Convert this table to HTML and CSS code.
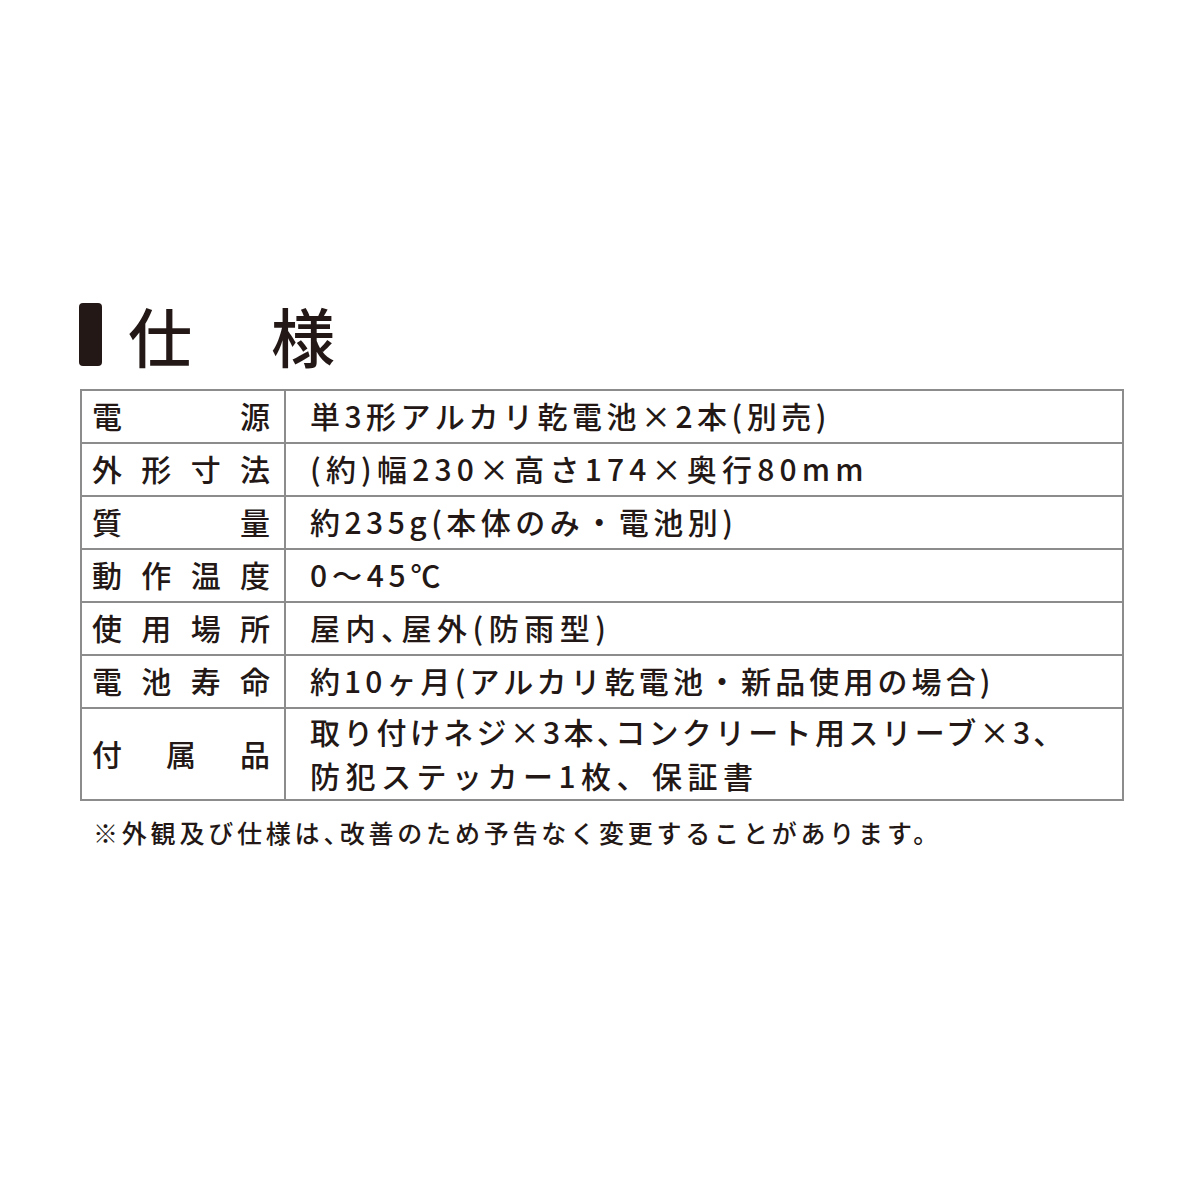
FILE: index.html
```html
<!DOCTYPE html>
<html lang="ja">
<head>
<meta charset="utf-8">
<title>仕様</title>
<link rel="stylesheet" href="styles.css">
</head>
<body>
<div class="page">
  <h1 class="title"><span class="bar"></span><span class="tc">仕</span><span class="tc">様</span></h1>
  <table class="spec">
    <tr><th><div class="lab"><span>電</span><span>源</span></div></th><td class="l1">単3形アルカリ乾電池×2本(別売)</td></tr>
    <tr><th><div class="lab"><span>外</span><span>形</span><span>寸</span><span>法</span></div></th><td class="l2">(約)幅230×高さ174×奥行80mm</td></tr>
    <tr><th><div class="lab"><span>質</span><span>量</span></div></th><td class="l3">約235g(本体のみ・電池別)</td></tr>
    <tr><th><div class="lab"><span>動</span><span>作</span><span>温</span><span>度</span></div></th><td class="l4">0〜45℃</td></tr>
    <tr><th><div class="lab"><span>使</span><span>用</span><span>場</span><span>所</span></div></th><td class="l5">屋内<span class="p">、</span>屋外(防雨型)</td></tr>
    <tr><th><div class="lab"><span>電</span><span>池</span><span>寿</span><span>命</span></div></th><td class="l6">約10ヶ月(アルカリ乾電池・新品使用の場合)</td></tr>
    <tr class="tall"><th><div class="lab"><span>付</span><span>属</span><span>品</span></div></th><td><span class="l7">取り付けネジ×3本<span class="p">、</span>コンクリート用スリーブ×3<span class="p">、</span></span><br><span class="l8">防犯ステッカー1枚、保証書</span></td></tr>
  </table>
  <p class="note">※外観及び仕様は<span class="p">、</span>改善のため予告なく変更することがあります。</p>
</div>
</body>
</html>
```
FILE: styles.css
```css
html, body {
  margin: 0;
  padding: 0;
  background: #ffffff;
}
body {
  font-family: "Noto Sans CJK JP", "Noto Sans", sans-serif;
  color: #231815;
}
.page {
  padding: 302px 0 0 80px;
  width: 1044px;
}
.title {
  display: flex;
  align-items: center;
  margin: 0 0 23px -1px;
  height: 64px;
  font-size: 64px;
  font-weight: 500;
  line-height: 64px;
}
.bar {
  width: 23px;
  height: 63px;
  border-radius: 4px;
  background: #231815;
  margin-right: 26px;
}
.tc + .tc {
  margin-left: 79px;
}
.spec {
  width: 1044px;
  border-collapse: collapse;
  border: 2px solid #8c8c8c;
}
.spec th, .spec td {
  border: 2px solid #8c8c8c;
  height: 47px;
  padding: 0 0 4px 0;
  font-size: 30px;
  font-weight: 500;
  line-height: 44px;
  vertical-align: middle;
  text-align: left;
  white-space: nowrap;
}
.spec th {
  width: 178px;
  padding: 0 14px 4px 10px;
}
.lab {
  display: flex;
  justify-content: space-between;
}
.spec td {
  padding-left: 24px;
  letter-spacing: 4px;
}
.spec tr.tall th, .spec tr.tall td {
  height: 88px;
  padding-bottom: 2px;
}
.l1 { letter-spacing: 4.5px !important; }
.l2 { letter-spacing: 5.2px !important; }
.l3 { letter-spacing: 4.5px !important; }
.l4 { letter-spacing: 4.8px !important; }
.l5 { letter-spacing: 5.5px !important; }
.l6 { letter-spacing: 4.1px !important; }
.l7 { letter-spacing: 3.3px; }
.l8 { letter-spacing: 5.5px; }
.p {
  font-feature-settings: "halt";
}
.note {
  margin: 13px 0 0 13px;
  font-size: 25px;
  font-weight: 500;
  line-height: 36px;
  letter-spacing: 3.8px;
}
```
